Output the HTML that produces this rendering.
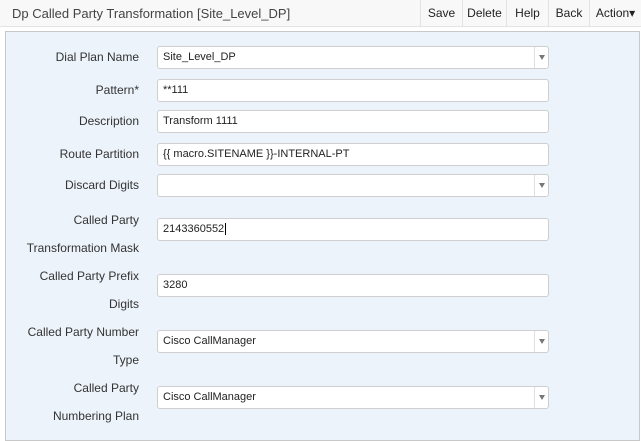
<!DOCTYPE html>
<html><head><style>
*{box-sizing:border-box;margin:0;padding:0}
body{width:641px;height:430px;background:#fff;font-family:"Liberation Sans",sans-serif;font-size:12px;color:#333;position:relative;overflow:hidden}
.hdr{position:absolute;left:0;top:0;width:641px;height:27px;background:#f8f8f8;border-bottom:1px solid #e4e4e4}
.title{position:absolute;left:12px;top:6px;font-size:13px;color:#444}
.btn{position:absolute;top:0;height:27px;line-height:26px;text-align:center;border-left:1px solid #e2e2e2;font-size:12px;color:#222}
.panel{position:absolute;left:5px;top:31px;width:635px;height:410px;background:#ecf3fa;border:1px solid #c8c8c8}
.lbl{position:absolute;right:502px;text-align:right;font-size:12px;color:#333;line-height:28px}
.in{position:absolute;left:157px;width:392px;height:23px;background:#fff;border:1px solid #cfcfcf;border-radius:3px;padding-left:5px;line-height:21px;font-size:11px;color:#222}
.sel::after{content:"";position:absolute;right:0;top:0;width:13px;height:21px;border-left:1px solid #e0e0e0}
.sel::before{content:"";position:absolute;right:3px;top:8px;border-left:3.5px solid transparent;border-right:3.5px solid transparent;border-top:5px solid #777}
</style></head><body>
<div class="hdr">
<div class="title">Dp Called Party Transformation [Site_Level_DP]</div>
<div class="btn" style="left:420px;width:42px">Save</div>
<div class="btn" style="left:462px;width:44px">Delete</div>
<div class="btn" style="left:506px;width:42px">Help</div>
<div class="btn" style="left:548px;width:41px">Back</div>
<div class="btn" style="left:589px;width:52px">Action&#9662;</div>
</div>
<div class="panel"></div>
<div class="lbl" style="top:43px">Dial Plan Name</div>
<div class="in sel" style="top:46px">Site_Level_DP</div>
<div class="lbl" style="top:76px">Pattern*</div>
<div class="in" style="top:79px">**111</div>
<div class="lbl" style="top:107px">Description</div>
<div class="in" style="top:110px">Transform 1111</div>
<div class="lbl" style="top:140px">Route Partition</div>
<div class="in" style="top:143px">{{ macro.SITENAME }}-INTERNAL-PT</div>
<div class="lbl" style="top:171px">Discard Digits</div>
<div class="in sel" style="top:174px"></div>
<div class="lbl" style="top:206px">Called Party<br>Transformation Mask</div>
<div class="in" style="top:218px">2143360552<span style="border-left:1px solid #000;margin-left:1px"></span></div>
<div class="lbl" style="top:262px">Called Party Prefix<br>Digits</div>
<div class="in" style="top:274px">3280</div>
<div class="lbl" style="top:318px">Called Party Number<br>Type</div>
<div class="in sel" style="top:330px">Cisco CallManager</div>
<div class="lbl" style="top:374px">Called Party<br>Numbering Plan</div>
<div class="in sel" style="top:386px">Cisco CallManager</div>
</body></html>
